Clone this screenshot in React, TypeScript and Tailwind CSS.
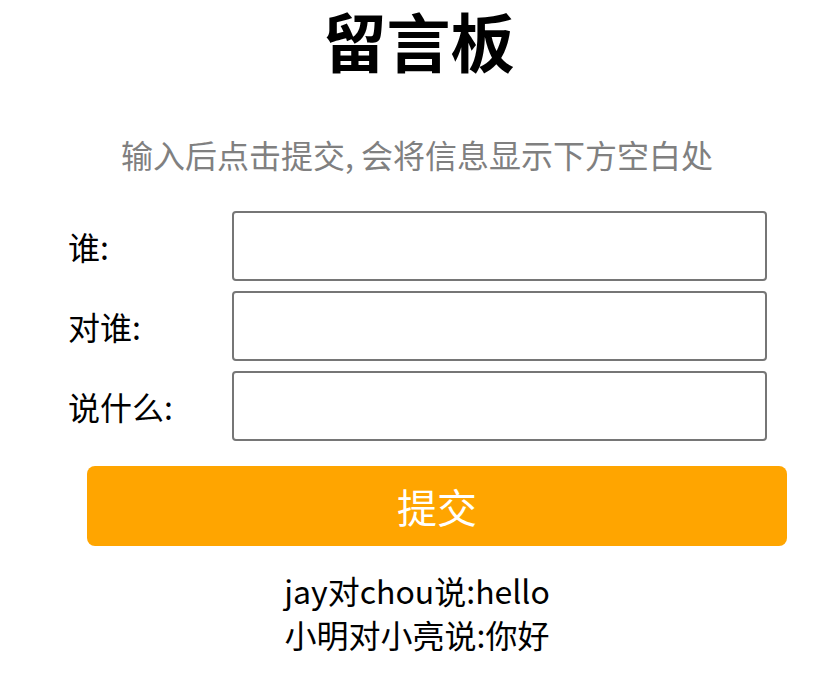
import { useState } from "react";

type Message = { from: string; to: string; text: string };

const fields = [
  { key: "from", label: "谁:" },
  { key: "to", label: "对谁:" },
  { key: "text", label: "说什么:" },
] as const;

export default function App() {
  const [form, setForm] = useState({ from: "", to: "", text: "" });
  const [messages, setMessages] = useState<Message[]>([
    { from: "jay", to: "chou", text: "hello" },
    { from: "小明", to: "小亮", text: "你好" },
  ]);

  const submit = () => {
    if (!form.from || !form.to || !form.text) return;
    setMessages([...messages, form]);
    setForm({ from: "", to: "", text: "" });
  };

  return (
    <div className="min-h-screen bg-white pt-px font-['Noto_Sans_CJK_SC',sans-serif] text-black">
      <h1 className="-mt-[10px] pl-[8px] text-center text-[64px] font-bold leading-[96px]">留言板</h1>
      <p className="mt-[43px] pl-[5px] text-center text-[32px] leading-[48px] text-[#808080]">
        输入后点击提交, 会将信息显示下方空白处
      </p>

      <div className="mt-[33px] flex flex-col gap-[10px]">
        {fields.map((f) => (
          <div key={f.key} className="flex items-center pl-[68px]">
            <label className="w-[164px] text-[32px] leading-[44px]">{f.label}</label>
            <input
              className="h-[70px] w-[535px] rounded-[4px] border-2 border-[#767676] bg-white px-2 text-[30px] outline-none"
              value={form[f.key]}
              onChange={(e) => setForm({ ...form, [f.key]: e.target.value })}
            />
          </div>
        ))}
      </div>

      <button
        type="button"
        onClick={submit}
        className="ml-[87px] mt-[25px] h-[80px] w-[700px] rounded-[8px] bg-[#ffa500] text-[40px] leading-[80px] text-white"
      >
        提交
      </button>

      <div className="mt-[22px] pl-[5px] text-center text-[32px] leading-[44px]">
        {messages.map((m, i) => (
          <div key={i}>
            {m.from}对{m.to}说:{m.text}
          </div>
        ))}
      </div>
    </div>
  );
}
